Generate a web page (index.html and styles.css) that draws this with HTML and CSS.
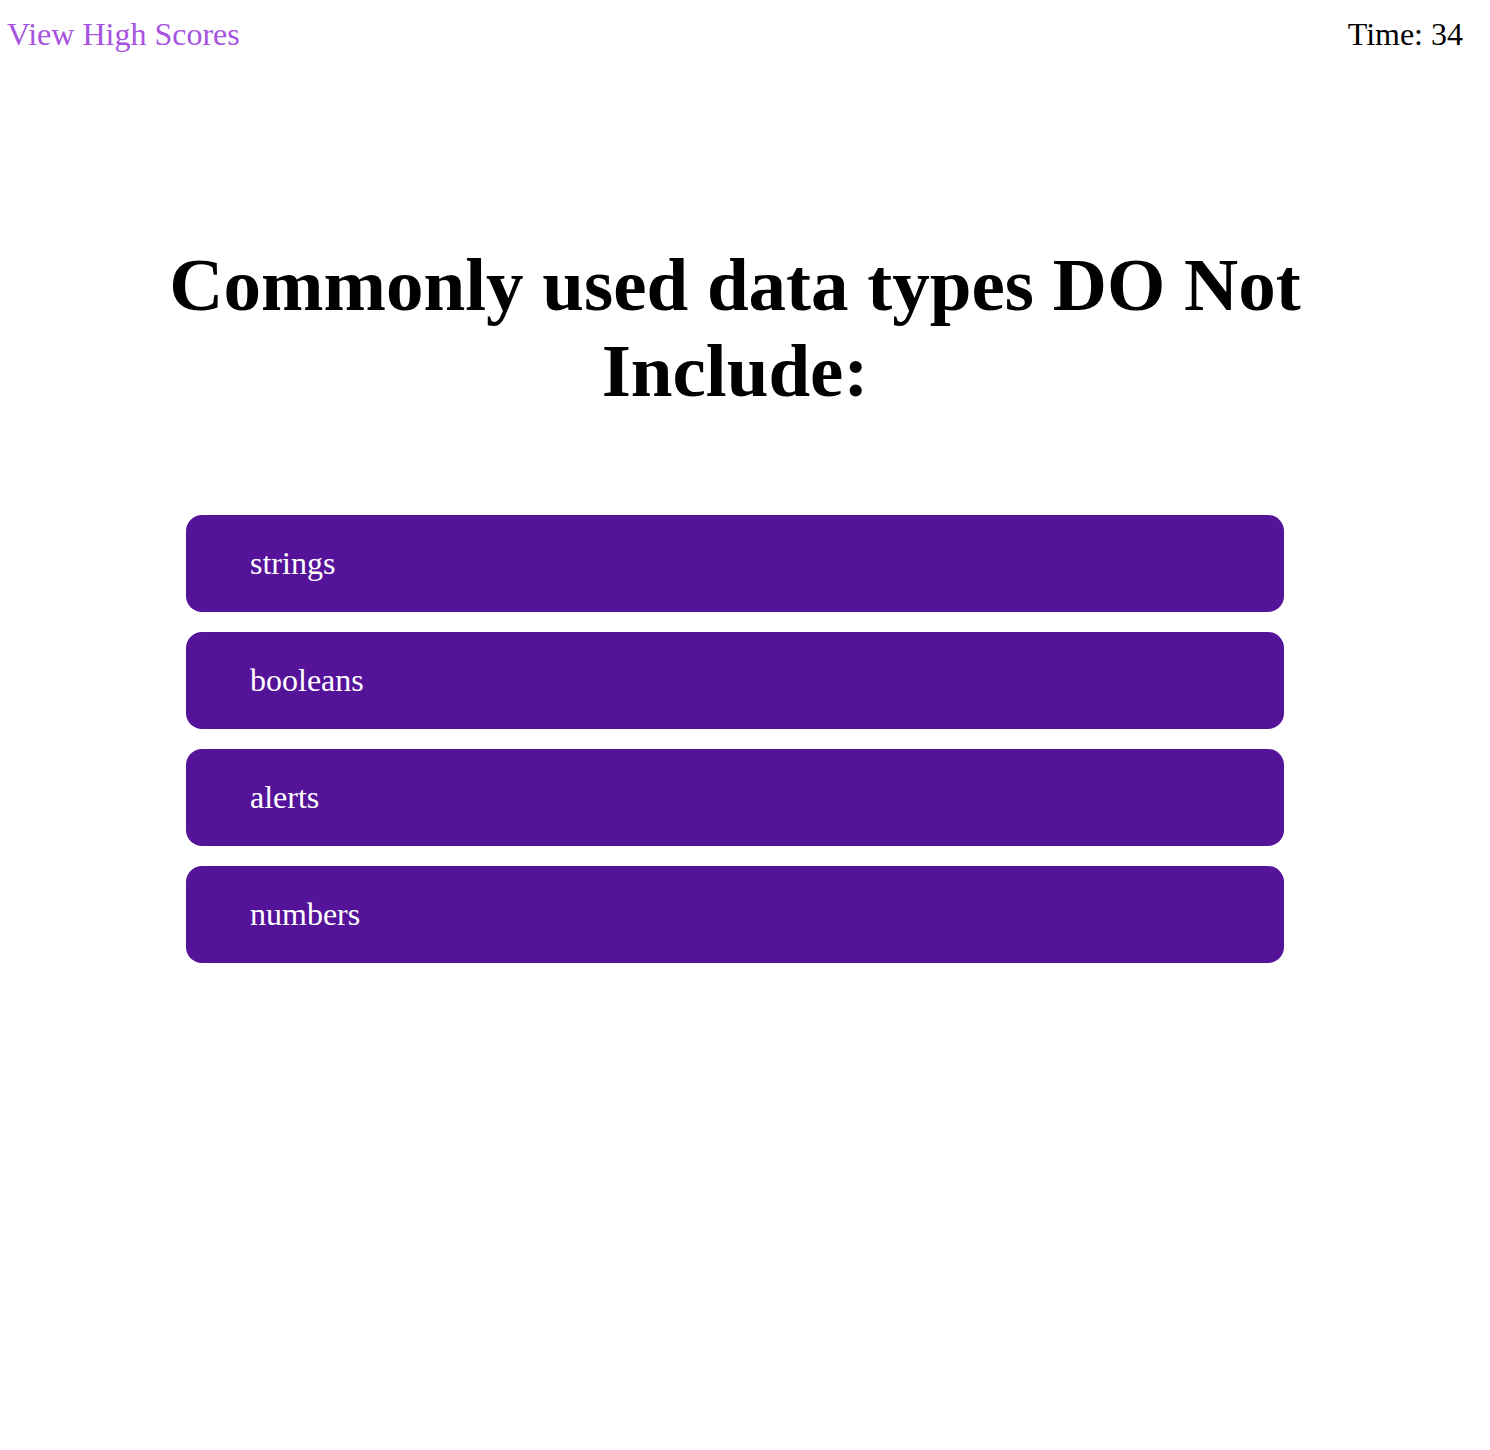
FILE: index.html
```html
<!DOCTYPE html>
<html lang="en">
<head>
<meta charset="utf-8">
<title>Code Quiz</title>
<link rel="stylesheet" href="styles.css">
</head>
<body>
<header class="topbar">
  <a class="scores-link" href="#">View High Scores</a>
  <span class="timer">Time: 34</span>
</header>
<main class="quiz">
  <h1 class="question">Commonly used data types DO Not Include:</h1>
  <div class="choices">
    <button class="choice">strings</button>
    <button class="choice">booleans</button>
    <button class="choice">alerts</button>
    <button class="choice">numbers</button>
  </div>
</main>
</body>
</html>
```

FILE: styles.css
```css
html, body {
  background: #ffffff;
}
body {
  margin: 0;
  padding: 16px 28px 0 8px;
  font-family: "Liberation Serif", "Times New Roman", serif;
  color: #000;
}
.topbar {
  display: flex;
  justify-content: space-between;
  align-items: baseline;
  font-size: 32px;
  line-height: 37px;
}
.scores-link {
  color: #a653e0;
  text-decoration: none;
  margin-left: -1px;
}
.timer {
  color: #000;
  margin-right: -1px;
}
.quiz {
  display: flex;
  flex-direction: column;
  align-items: center;
  padding-top: 189px;
}
.question {
  margin: 0;
  max-width: 1200px;
  text-align: center;
  font-size: 75px;
  line-height: 86px;
  font-weight: bold;
}
.choices {
  margin-top: 101px;
  width: 1098px;
  display: flex;
  flex-direction: column;
  gap: 20px;
}
.choice {
  display: block;
  width: 100%;
  text-align: left;
  border: none;
  border-radius: 16px;
  background: #55139a;
  color: #ffffff;
  font-family: "Liberation Serif", "Times New Roman", serif;
  font-size: 32px;
  line-height: 37px;
  padding: 30px 64px;
  margin: 0;
  cursor: pointer;
}
```
